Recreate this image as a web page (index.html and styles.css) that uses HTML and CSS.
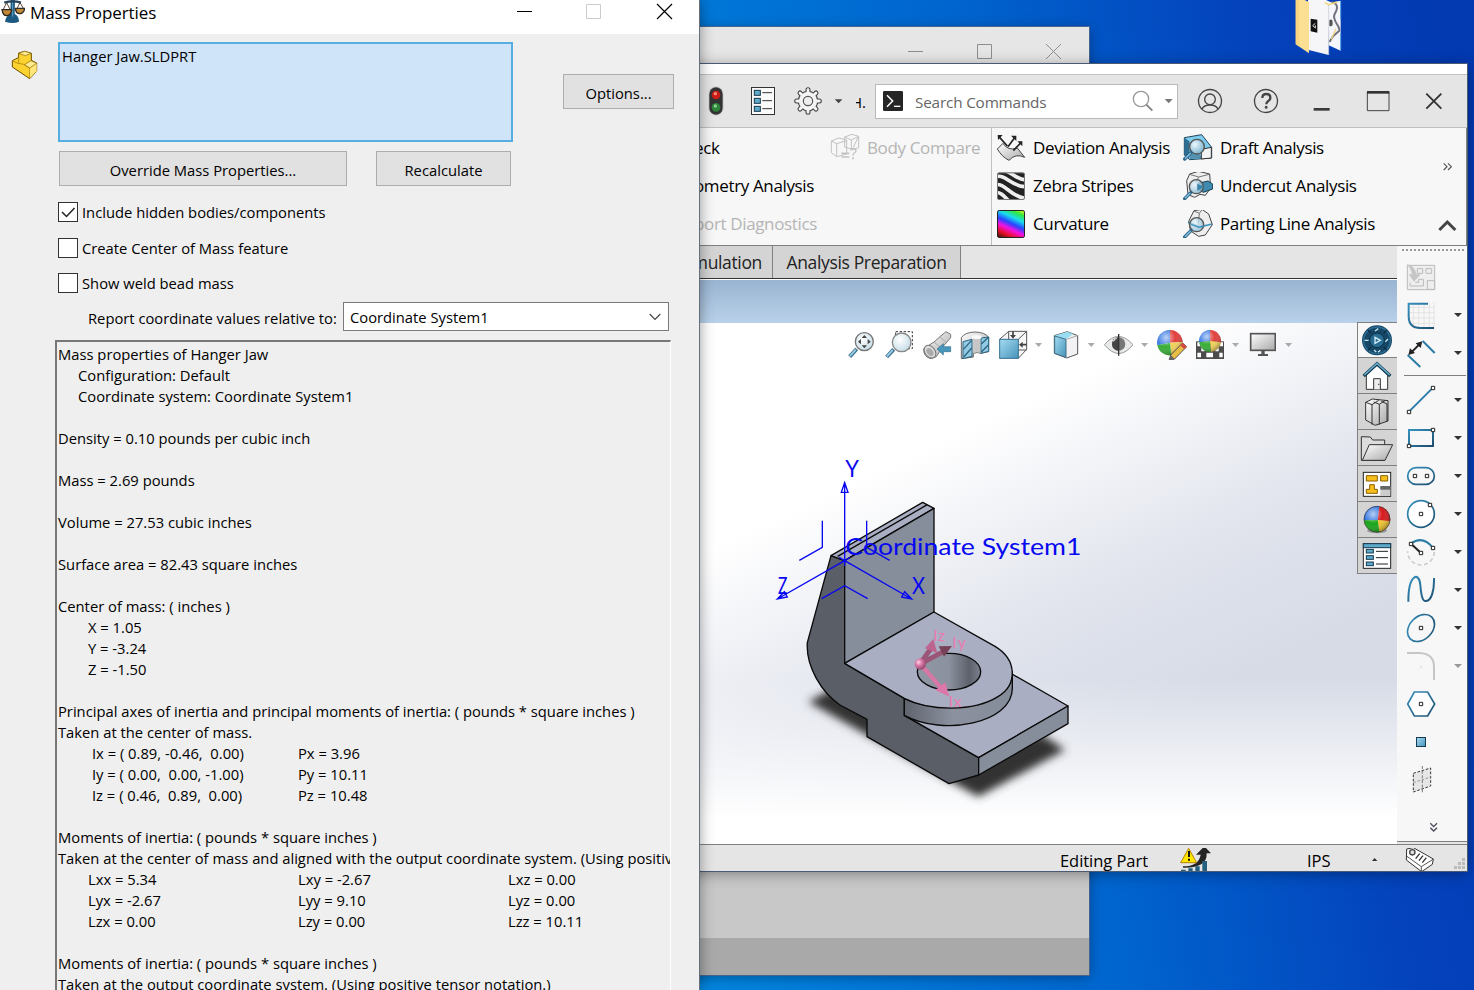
FILE: index.html
```html
<!DOCTYPE html>
<html lang="en">
<head>
<meta charset="utf-8">
<title>Mass Properties</title>
<link rel="stylesheet" href="styles.css">
</head>
<body>
<svg class="defs" width="0" height="0">
  <defs>
    <linearGradient id="ink" x1="0" y1="0" x2="1" y2="1"><stop offset="0" stop-color="#3590bd"/><stop offset="1" stop-color="#1d4f70"/></linearGradient>
    <linearGradient id="sky" x1="0" y1="0" x2="1" y2="1"><stop offset="0" stop-color="#a5dcf3"/><stop offset="1" stop-color="#4593b8"/></linearGradient>
    <linearGradient id="steel" x1="0" y1="0" x2="1" y2="1"><stop offset="0" stop-color="#fff"/><stop offset="1" stop-color="#a8a8a8"/></linearGradient>
    <radialGradient id="lens" cx=".4" cy=".35" r=".7"><stop offset="0" stop-color="#fff"/><stop offset="1" stop-color="#c3dbe6"/></radialGradient>
    <radialGradient id="lens2" cx=".35" cy=".35" r=".8"><stop offset="0" stop-color="#eaf8ff"/><stop offset="1" stop-color="#6ea9c6"/></radialGradient>
    <radialGradient id="gloss" cx=".35" cy=".3" r=".75"><stop offset="0" stop-color="#fff" stop-opacity=".65"/><stop offset=".5" stop-color="#fff" stop-opacity="0"/><stop offset="1" stop-color="#000" stop-opacity=".35"/></radialGradient>
    <linearGradient id="rainbow" gradientUnits="userSpaceOnUse" x1="984" y1="443" x2="940" y2="536"><stop offset="0" stop-color="#f5f51c"/><stop offset=".14" stop-color="#35e83b"/><stop offset=".32" stop-color="#19dcf0"/><stop offset=".5" stop-color="#2744ff"/><stop offset=".66" stop-color="#f312e2"/><stop offset=".84" stop-color="#e8102c"/><stop offset="1" stop-color="#5c1408"/></linearGradient>
    <linearGradient id="rim"><stop offset="0" stop-color="#5f646e"/><stop offset=".45" stop-color="#8b919e"/><stop offset="1" stop-color="#858c99"/></linearGradient>
    <linearGradient id="bore"><stop offset="0" stop-color="#8f96a4"/><stop offset=".5" stop-color="#8b919f"/><stop offset=".82" stop-color="#5d616b"/><stop offset="1" stop-color="#7c828f"/></linearGradient>
    <radialGradient id="pinkBall" cx=".35" cy=".35" r=".7"><stop offset="0" stop-color="#ffd3e6"/><stop offset=".4" stop-color="#dc7bab"/><stop offset="1" stop-color="#8d4468"/></radialGradient>
    <filter id="soft" x="-20%" y="-40%" width="140%" height="180%"><feGaussianBlur stdDeviation="13"/></filter>
    <clipPath id="zebraClip"><rect x="922" y="338" width="82" height="81" rx="5"/></clipPath>
  </defs>
</svg>

<main class="desktop">
  <svg class="folder" width="52" height="60" viewBox="60 0 156 180">
    <path d="M172 10L212 2V152L176 136Z" fill="#f4f6fb"/><path d="M186 6C205 12 204 25 194 42C184 62 212 78 208 92L190 108L178 126" fill="none" stroke="#71717f" stroke-width="6"/><path d="M212 4V58M212 100V150" stroke="#4d9de0" stroke-width="3"/><path d="M178 60q10-5 10 9t-10 8Z" fill="#555"/><path d="M198 86l-14 32" stroke="#f4d47c" stroke-width="4"/>
    <path d="M114 0H168L186 8L176 14V165L116 150Z" fill="#f6f6f8"/><path d="M164 8l12 6 26-8" fill="none" stroke="#f2d679" stroke-width="4"/><path d="M176 14V165" stroke="#c5c9d2" stroke-width="2"/><path d="M122 56L142 59V98L122 94Z" fill="#111"/><path d="M136 70L128 77L136 84V76" fill="none" stroke="#ddd" stroke-width="3"/>
    <path d="M77 0H104L117 6V160L77 133Z" fill="#fbdf92"/><path d="M77 0H88V140L77 133Z" fill="#f3cd74" opacity=".6"/>
  </svg>

  <section class="back-window">
    <header class="back-title">
      <svg width="155" height="20" viewBox="0 0 155 20" fill="none" stroke="#8e8e8e"><path d="M1 10.500H16M70.500 3.500h14v14h-14ZM139 3l15 15M154 3l-15 15"/></svg>
    </header>
    <footer class="back-footer"></footer>
  </section>

  <section class="cad">
    <div class="cad-edge"></div>
    <header class="cad-title">
      <svg class="light" width="16" height="34" viewBox="54 72 48 102"><rect x="55" y="79" width="46" height="88" rx="22" fill="#d0d0d0"/><rect x="58" y="82" width="40" height="82" rx="20" fill="#333"/><circle cx="78" cy="105" r="13" fill="#c91d17"/><circle cx="76" cy="101" r="5" fill="#ff8a7c"/><circle cx="78" cy="142" r="13" fill="#2d853b"/><circle cx="76" cy="138" r="5" fill="#8bd08f"/></svg>
      <svg class="props" width="26" height="34" viewBox="180 72 78 102"><rect x="184.500" y="82.500" width="69" height="81" fill="#fafafa" stroke="#333" stroke-width="3"/><g fill="#5fa9c9" stroke="#16394d" stroke-width="3"><rect x="193" y="91" width="18" height="15"/><rect x="193" y="115" width="18" height="15"/><rect x="193" y="139" width="18" height="15"/></g><path d="M217 98H246M217 122H246M217 146H246" stroke="#333" stroke-width="3"/></svg>
      <svg class="gear" width="30" height="34" viewBox="309 72 90 102"><g stroke-linecap="round"><g stroke="#444" stroke-width="15"><path d="M354 89v68M320 123h68M330 99l48 48M330 147l48-48"/></g><circle cx="354" cy="123" r="31" fill="#444"/><g stroke="#f4f4f4" stroke-width="8.500"><path d="M354 89v68M320 123h68M330 99l48 48M330 147l48-48"/></g></g><circle cx="354" cy="123" r="27.500" fill="#f4f4f4"/><circle cx="354" cy="123" r="14" fill="#eee" stroke="#555" stroke-width="3.500"/></svg>
      <svg class="gear-arrow" width="10" height="34" viewBox="432 72 30 102"><path d="M434 118h23l-11 12Z" fill="#444"/></svg>
      <span class="crumb"><span>H.</span></span>
      <div class="search">
        <svg width="20" height="20" viewBox="579 93 60 60"><rect x="579" y="93" width="60" height="60" rx="4" fill="#252525"/><path d="M591 106l17 17-17 17" fill="none" stroke="#fff" stroke-width="4.500"/><path d="M612 139h19" stroke="#fff" stroke-width="4"/></svg>
        <span class="search-text">Search Commands</span>
        <svg width="41" height="24" viewBox="154 90 123 72"><circle cx="181" cy="120" r="23" fill="none" stroke="#999" stroke-width="4"/><path d="M197 137l18 18" stroke="#888" stroke-width="6"/><path d="M252 120h24l-12 13Z" fill="#777"/></svg>
      </div>
      <svg class="user" width="26" height="34" viewBox="351 72 78 102" fill="none" stroke="#444" stroke-width="4"><circle cx="390" cy="123" r="34.500"/><circle cx="390" cy="118" r="16"/><path d="M366 148q4-13 24-13t24 13"/></svg>
      <svg class="help" width="26" height="34" viewBox="519 72 78 102" fill="none" stroke="#444" stroke-width="4"><circle cx="558" cy="123" r="34.500"/><path d="M547 114q0-12 12-12t12 11q0 6-6 10t-6 10" stroke-width="7"/><circle cx="558.500" cy="142" r="2" stroke-width="5"/></svg>
      <svg class="win-buttons" width="130" height="34" viewBox="700 72 390 102"><path d="M702 148h48" stroke="#3a3a3a" stroke-width="8"/><path d="M863 96h65v56h-65Z" fill="none" stroke="#444" stroke-width="3"/><path d="M862 97h67" stroke="#333" stroke-width="8"/><path d="M1040 101l45 45M1085 101l-45 45" stroke="#333" stroke-width="5.500"/></svg>
    </header>

    <div class="ribbon">
      <div class="group cut"><span class="cmd"><span>eck</span></span><span class="cmd geo"><span>ometry Analysis</span></span><span class="cmd off"><span>port Diagnostics</span></span></div>
      <div class="group compare">
        <span class="cmd off"><svg width="30" height="28" viewBox="420 222 90 84" fill="none" stroke="#c2c2c2" stroke-width="3"><path d="M424 243l22-9 24 6v42l-30 8-16-12ZM424 243l16 8 30-9M440 251v38M464 231l22-8 20 6v34l-16 6-26-8ZM464 231l20 9 22-11M484 240v28M490 262l14-30"/><path d="M454 280h24M454 291h24" stroke-width="5"/><path d="M482 272q1-7 8-7t8 7q0 4-5 7t-4 8" stroke-width="4"/><path d="M489 292v6" stroke-width="5"/></svg><span>Body Compare</span></span>
      </div>
      <div class="group analyze">
        <span class="cmd"><svg width="30" height="28" viewBox="918 222 90 84"><path d="M922 267l17-17q15 24 43 14l22 28q-27-13-47 9Q936 291 922 267Z" fill="url(#steel)" stroke="#444" stroke-width="3"/><g stroke="#222" stroke-width="5" fill="none"><path d="M952 258l-26-29M954 260l22-30M970 272l23-24"/></g><path d="M923 225h15l-14 15ZM963 227h16v16ZM982 244h15v15Z" fill="#222"/></svg><span>Deviation Analysis</span></span>
        <span class="cmd"><svg width="30" height="28" viewBox="918 336 90 84"><rect x="922" y="338" width="82" height="81" rx="5" fill="#222"/><g clip-path="url(#zebraClip)" fill="none" stroke="#eee" stroke-width="11"><path d="M918 350c30-8 40 26 86 30M940 332c25 2 35 26 68 28M914 374c34-6 44 36 96 42M914 398c20-4 30 14 44 26"/></g><rect x="922.500" y="338.500" width="81" height="80" rx="5" fill="none" stroke="#777" stroke-width="3"/></svg><span>Zebra Stripes</span></span>
        <span class="cmd"><svg width="30" height="28" viewBox="918 450 90 84"><rect x="922.500" y="451.500" width="81" height="81" rx="5" fill="url(#rainbow)" stroke="#222" stroke-width="3"/></svg><span>Curvature</span></span>
      </div>
      <div class="group draft">
        <span class="cmd"><svg width="31" height="28" viewBox="306 222 93 84"><path d="M313 233l52-9 30 38v32l-66 5-16-14Z" fill="#7fcdee" stroke="#1d4257" stroke-width="3"/><path d="M313 233l14 10v52l-14-9Z" fill="#2d6d90"/><path d="M327 243l40 50-38 5Z" fill="#5391b0"/><path d="M364 268l30-6v32l-30 3Z" fill="#f4f4f4" stroke="#333" stroke-width="3"/><circle cx="351" cy="260" r="22" fill="url(#lens2)" stroke="#555" stroke-width="4"/><path d="M333 278l-19 19" stroke="#2c6488" stroke-width="10" stroke-linecap="round"/><path d="M332 279l-17 17" stroke="#86c5e2" stroke-width="4"/></svg><span>Draft Analysis</span></span>
        <span class="cmd"><svg width="31" height="28" viewBox="306 336 93 84"><path d="M320 362l9-20 26-8 34 8 3 42-16 22-16-3-16 9-20-8Z" fill="#eee" stroke="#444" stroke-width="3"/><path d="M329 343l27 8 32-8M356 351l-8 16" fill="none" stroke="#777" stroke-width="3"/><path d="M354 370l30-7 14 9v15l-28 10-16-10Z" fill="#3f8bb0" stroke="#173d52" stroke-width="3"/><circle cx="349" cy="380" r="21" fill="url(#lens2)" fill-opacity=".8" stroke="#555" stroke-width="4"/><path d="M352 371v22l20-13Z" fill="#3984a9"/><path d="M332 398l-18 18" stroke="#2c6488" stroke-width="10" stroke-linecap="round"/><path d="M331 399l-16 16" stroke="#86c5e2" stroke-width="4"/></svg><span>Undercut Analysis</span></span>
        <span class="cmd"><svg width="31" height="28" viewBox="306 450 93 84"><path d="M326 484l16-32 24-4 20 14 11 32-21 31-20 4-24-16Z" fill="#eee" stroke="#444" stroke-width="3"/><path d="M342 453l16 7 8-11M358 460l-3 30" fill="none" stroke="#777" stroke-width="3"/><path d="M324 486l34 15 38-9" fill="none" stroke="#3d93bb" stroke-width="5"/><circle cx="350" cy="494" r="21" fill="url(#lens2)" fill-opacity=".7" stroke="#555" stroke-width="4"/><path d="M333 493l24 9 14-4" fill="none" stroke="#3d93bb" stroke-width="4"/><path d="M333 512l-19 19" stroke="#2c6488" stroke-width="10" stroke-linecap="round"/><path d="M332 513l-17 17" stroke="#86c5e2" stroke-width="4"/></svg><span>Parting Line Analysis</span></span>
      </div>
      <svg class="ribbon-end" width="22" height="78" viewBox="1067 300 66 234" fill="none"><path d="M1090 310l10 10-10 10M1103 310l10 10-10 10" stroke="#555" stroke-width="3.500"/><path d="M1077 510l24-24 24 24" stroke="#444" stroke-width="9"/></svg>
    </div>

    <div class="workspace">
      <div class="doc">
        <nav class="tabs"><span class="tab first">mulation</span><span class="tab">Analysis Preparation</span></nav>
        <div class="doc-bar"></div>
        <div class="view">
          <svg class="scene" width="340" height="380" viewBox="0 0 1020 1140">
            <path d="M145 785L220 745L700 900L850 885L915 930L655 1070L321 885Z" fill="#333" filter="url(#soft)"/>
            <g stroke="#0a0a0a" stroke-width="4" stroke-linejoin="round">
              <path d="M213 347L254 362V670L433 775V826L656 953V1005L567 1031L321 890V838L240 795C185 757 137 680 142 608Z" fill="#5a5e67"/>
              <path d="M213 347L488 187L522 205L254 362Z" fill="#a9aec2"/><path d="M233 349L502 194" fill="none"/>
              <path d="M254 362L522 205V516L254 670Z" fill="#868e9b"/>
              <path d="M700 670L924 798L656 953L433 826Z" fill="#a9aec2"/>
              <path d="M656 953L924 798V851L656 1005Z" fill="#868e9b"/>
              <path d="M433 775C530 825 757 810 757 695V745C757 850 550 890 433 826Z" fill="url(#rim)"/>
              <path d="M254 670L522 516L705 619C773 660 772 735 714 770C640 816 510 814 433 775Z" fill="#a9aec2"/>
              <ellipse cx="567" cy="695" rx="95" ry="55" fill="url(#bore)"/>
            </g>
            <g class="principal"><path d="M480 672L513 625" stroke="#9b5576" stroke-width="15"/><path d="M520 597L495 625L532 640Z" fill="#bd648f"/><path d="M485 670L555 632" stroke="#9b5576" stroke-width="14"/><path d="M576 618L536 619L552 650Z" fill="#784258"/><path d="M481 672L542 742" stroke="#d777a5" stroke-width="13"/><path d="M568 770L526 750L556 727Z" fill="#dc78a9"/><circle cx="481" cy="672" r="17" fill="url(#pinkBall)"/>
              <text x="520" y="602" textLength="34">Iz</text><text x="577" y="624" textLength="40">Iy</text><text x="566" y="802" textLength="38">Ix</text></g>
            <g fill="none" stroke="#0808f0" stroke-width="4"><path d="M254 362V128M244 157L254 128L264 157ZM254 362L455 477M425 471L455 477L434 455ZM254 362L52 477M73 455L52 477L82 471ZM238 352L270 372M270 352L238 372M254 350V378M187 242V322L118 361M320 242V322L389 361M185 476L254 437L323 476"/></g>
            <g class="axis-text"><text x="256" y="112" textLength="41" lengthAdjust="spacingAndGlyphs">Y</text><text x="456" y="461" textLength="39" lengthAdjust="spacingAndGlyphs">X</text><text x="54" y="461" textLength="28" lengthAdjust="spacingAndGlyphs">Z</text><text x="256" y="345" textLength="708" lengthAdjust="spacingAndGlyphs">Coordinate System1</text></g>
          </svg>
          <div class="view-tools">
            <svg width="29" height="30" viewBox="51 60 87 90"><circle cx="103" cy="95" r="27" fill="url(#lens)" stroke="#777" stroke-width="4"/><path d="M103 75l8 9h-16ZM103 115l8-9h-16ZM84 95l9-8v16ZM122 95l-9-8v16Z" fill="#444"/><path d="M80 117l-21 23" stroke="#457895" stroke-width="12"/><path d="M77 119l-17 19" stroke="#9dd3eb" stroke-width="5"/></svg>
            <svg width="30" height="30" viewBox="162 60 90 90"><path d="M197 65h50v51h-50Z" fill="none" stroke="#333" stroke-width="3" stroke-dasharray="7 5"/><circle cx="215" cy="97" r="28" fill="url(#lens)" stroke="#888" stroke-width="4"/><path d="M191 118l-21 23" stroke="#457895" stroke-width="12"/><path d="M188 120l-17 19" stroke="#9dd3eb" stroke-width="5"/></svg>
            <svg width="30" height="30" viewBox="276 60 90 90"><path d="M281 116l31-20 18-16 18-15 14 8v10l-24 28-19 29-16 6q-23-5-22-30Z" fill="url(#steel)" stroke="#777" stroke-width="3"/><path d="M312 96l26 22M330 81l19 17" stroke="#aaa" stroke-width="3"/><ellipse cx="300" cy="125" rx="15" ry="21" transform="rotate(-38 300 125)" fill="#ddd" stroke="#777" stroke-width="3"/><ellipse cx="300" cy="126" rx="9" ry="13" transform="rotate(-38 300 126)" fill="#aaa"/><path d="M321 117l19-16v9h22v15h-22v10Z" fill="#4a97bd" stroke="#376f90" stroke-width="2"/></svg>
            <svg width="30" height="30" viewBox="390 60 90 90"><path d="M394 83q10-16 41-17 31 1 41 16v43l-24 5q-10-5-22 0v11l-36 5Z" fill="url(#steel)" stroke="#666" stroke-width="3"/><path d="M399 95l27-7v51l-27 7ZM453 84l23-3v43l-23 6Z" fill="#91cbe3" stroke="#2d6482" stroke-width="3"/><path d="M400 118l25-27M401 141l24-27M454 102l21-20M454 126l21-21" stroke="#2d6482" stroke-width="4"/><path d="M429 84h22v45q-8-5-22 0Z" fill="#c7c7c7"/><ellipse cx="440" cy="81" rx="15" ry="6" fill="#fafafa"/></svg>
            <svg width="28" height="30" viewBox="504 60 84 90" overflow="visible"><path d="M509 88l27-24h54v54l-25 27M565 88l25-24M536 64v24M565 120h25" fill="#f7f7f7" stroke="#555" stroke-width="3"/><rect x="509" y="88" width="56" height="57" fill="url(#sky)" stroke="#366f90" stroke-width="3"/><path d="M549 64v12M590 104h-14" stroke="#444" stroke-width="5"/><path d="M540 75h18l-9 11ZM578 95v18l-11-9Z" fill="#444"/></svg>
            <svg width="10" height="30" viewBox="612 60 30 90"><path d="M615 99h21l-10 12Z" fill="#aaa"/></svg>
            <svg width="27" height="30" viewBox="666 60 81 90"><path d="M673 77l39-12 31 12v55l-33 12-37-14Z" fill="#f2f2f5" stroke="#555" stroke-width="3"/><path d="M673 77l39-12 18 7-23 16Z" fill="#99ddf3"/><path d="M674 78l34 10v54l-34-12Z" fill="url(#sky)" stroke="#416f88" stroke-width="3"/><path d="M709 88l34-11" stroke="#aaa" stroke-width="3"/></svg>
            <svg width="8" height="30" viewBox="771 60 24 90"><path d="M773 99h21l-10 12Z" fill="#aaa"/></svg>
            <svg width="30" height="30" viewBox="819 60 90 90"><path d="M823 104q42-49 86 0-42 53-86 0Z" fill="#e7e9ea" stroke="#999" stroke-width="3"/><circle cx="866" cy="102" r="20" fill="#777"/><path d="M866 82a20 20 0 0 0 0 40Z" fill="#444"/><path d="M866 72v65" stroke="#333" stroke-width="4"/><path d="M850 94q4-8 10-9" fill="none" stroke="#ddd" stroke-width="4"/></svg>
            <svg width="7" height="30" viewBox="933 60 21 90"><path d="M933 99h21l-10 12Z" fill="#aaa"/></svg>
            <svg width="31" height="30" viewBox="978 60 93 90"><g><path d="M1020 98V60a38 38 0 0 0-38 46Z" fill="#3d7ce3"/><path d="M1020 98V60a38 38 0 0 1 38 36Z" fill="#df3f3c"/><path d="M1020 98l38-2a38 38 0 0 1-34 40Z" fill="#f2d15a"/><path d="M1020 98l-38 8a38 38 0 0 0 42 30Z" fill="#37ad36"/><circle cx="1020" cy="98" r="38" fill="url(#gloss)"/></g><path d="M1058 99l12 11-36 37-17 5 5-17Z" fill="#e9bd43" stroke="#555" stroke-width="3"/><path d="M1058 99l12 11-7 8-13-12Z" fill="#d44a41"/><path d="M1017 152l5-17 12 12Z" fill="#666"/></svg>
            <svg width="29" height="30" viewBox="1095 60 87 90"><rect x="1098" y="94" width="84" height="53" fill="#4c4c4c"/><path d="M1102 97h10v12h-10ZM1170 97h9v12h-9ZM1114 112h10v12h-10ZM1156 112h10v12h-10ZM1102 128h11v14h-11ZM1129 128h20v14h-20ZM1168 128h10v14h-10Z" fill="#fff"/><path d="M1140 93V60a33 33 0 0 0-33 37Z" fill="#3d7ce3"/><path d="M1140 93V60a33 33 0 0 1 33 37Z" fill="#df3f3c"/><path d="M1140 93l33 4a33 33 0 0 1-31 29Z" fill="#f2d15a"/><path d="M1140 93l-33 4a33 33 0 0 0 35 29Z" fill="#37ad36"/><circle cx="1140" cy="93" r="33" fill="url(#gloss)"/></svg>
            <svg width="9" height="30" viewBox="1206 60 27 90"><path d="M1206 99h21l-10 12Z" fill="#aaa"/></svg>
            <svg width="27" height="30" viewBox="1257 60 81 90"><rect x="1262" y="71" width="74" height="50" fill="url(#steel)" stroke="#555" stroke-width="5"/><path d="M1294 122h10v10h10v6h-30v-6h10Z" fill="#555"/></svg>
            <svg width="9" height="30" viewBox="1362 60 27 90"><path d="M1365 99h21l-10 12Z" fill="#aaa"/></svg>
          </div>
          <aside class="pane-tabs">
            <span class="pane on"><svg width="39" height="34" viewBox="54 249 117 102"><circle cx="111" cy="301" r="45" fill="#164766"/><circle cx="111" cy="301" r="40" fill="none" stroke="#2c6e93" stroke-width="4"/><circle cx="111" cy="301" r="22" fill="#286c91" stroke="#0b2e45" stroke-width="3"/><path d="M105 292l16 9-16 9Z" fill="none" stroke="#d6eefa" stroke-width="4"/><path d="M74 301h12M136 305l8-8M105 273l10-7M102 330l7 6M114 336q6-2 6-6" fill="none" stroke="#c6e6f4" stroke-width="4"/><path d="M84 270l9 9M131 321l9 9M131 280l9-9M84 331l9-9" stroke="#0b2e45" stroke-width="4"/></svg></span>
            <span class="pane"><svg width="39" height="35" viewBox="54 354 117 105"><path d="M79 405v43h64v-43l-32-29Z" fill="#fff" stroke="#333" stroke-width="3"/><path d="M101 448v-32h20v32" fill="#eee" stroke="#333" stroke-width="3"/><path d="M71 408l40-37 40 37" fill="none" stroke="#163d54" stroke-width="10"/><path d="M73 405l38-35 38 35" fill="none" stroke="#65a9c8" stroke-width="5"/><path d="M114 433h4" stroke="#333" stroke-width="3"/></svg></span>
            <span class="pane"><svg width="39" height="35" viewBox="54 462 117 105" fill="url(#steel)" stroke="#333" stroke-width="3"><path d="M77 487l20-10 47 5v61l-38 13-29-16Z"/><path d="M77 487l19 7v60M96 494l20-13M101 486l17 7v61M118 493l18-12M124 484l17 8v52" fill="none"/></svg></span>
            <span class="pane"><svg width="39" height="35" viewBox="54 570 117 105" stroke="#333" stroke-width="3"><path d="M64 590l27 1 7 9h36v61H64Z" fill="#ddd"/><path d="M88 614h70l-23 47H67Z" fill="url(#steel)"/></svg></span>
            <span class="pane"><svg width="39" height="35" viewBox="54 678 117 105"><rect x="70" y="697" width="82" height="72" fill="#fff" stroke="#222" stroke-width="3"/><path d="M79 707h33v16H79ZM122 707h21v16h-21ZM89 734h14v14h9v12H79v-12h10Z" fill="#f7bf1b" stroke="#8a5e00" stroke-width="3"/><path d="M121 740h30v28h-30Z" fill="#ccc"/><path d="M121 738h31v11h-31Z" fill="#666"/></svg></span>
            <span class="pane"><svg width="39" height="35" viewBox="54 786 117 105"><ellipse cx="111" cy="872" rx="30" ry="8" fill="#999"/><path d="M113 840l5-41a39 39 0 0 0-46 42Z" fill="#2e72df"/><path d="M113 840l5-41a39 39 0 0 1 32 46Z" fill="#d7191d"/><path d="M113 840l37 3a39 39 0 0 1-32 33Z" fill="#f0c330"/><path d="M113 840l-41 1a39 39 0 0 0 46 35Z" fill="#19a419"/><circle cx="111" cy="838" r="39" fill="url(#gloss)" stroke="#333" stroke-width="2"/></svg></span>
            <span class="pane"><svg width="39" height="35" viewBox="54 894 117 105"><rect x="70" y="911" width="82" height="74" fill="#fff" stroke="#222" stroke-width="3"/><rect x="70" y="911" width="82" height="12" fill="#5ea8ca" stroke="#173b50" stroke-width="3"/><g fill="#5ea8ca" stroke="#173b50" stroke-width="3"><rect x="79" y="928" width="21" height="11"/><rect x="79" y="947" width="21" height="11"/><rect x="79" y="966" width="21" height="11"/></g><path d="M108 934h36M108 953h36M108 972h36" stroke="#222" stroke-width="3"/></svg></span>
          </aside>
        </div>
      </div>

      <aside class="sketch-bar">
        <span class="grip"></span>
        <span class="tool"><svg width="30" height="30" viewBox="198 66 90 90"><path d="M202 76h82v73h-82Z" fill="#eee" stroke="#bbb" stroke-width="3"/><path d="M232 86h16v14h-16ZM258 86h17v14h-17ZM226 127h10v-9h14v20h-40v-10M262 122h22v26h-22Z" fill="none" stroke="#bbb" stroke-width="3"/><path d="M199 73q24 1 31 30h12l-20 22-16-22h9q0-16-16-30Z" fill="#c6c6c6"/></svg></span>
        <span class="tool"><svg width="30" height="30" viewBox="198 180 90 90"><path d="M206 202h79M206 218h79M206 234h79M206 250h79M220 187v82M236 187v82M252 187v82M268 187v82M282 187v82" stroke="#ddd" stroke-width="2"/><path d="M264 191h-58v38q0 35 35 35h41" fill="none" stroke="url(#ink)" stroke-width="6"/></svg><i class="arrow"></i></span>
        <span class="tool"><svg width="30" height="30" viewBox="198 294 90 90" fill="none"><path d="M203 345l38 36M248 303l36 36" stroke="#2b7da6" stroke-width="6"/><path d="M211 340l30-30" stroke="#222" stroke-width="6"/><path d="M205 345l5-20 15 14ZM247 304l-5 20-15-14Z" fill="#222"/></svg><i class="arrow"></i></span>
        <span class="rule"></span>
        <span class="tool"><svg width="30" height="30" viewBox="198 435 90 90"><path d="M207 515l72-72" stroke="#2b7da6" stroke-width="6"/><path d="M202 511h10v10h-10ZM274 439h10v10h-10Z" fill="#fff" stroke="#222" stroke-width="3"/></svg><i class="arrow"></i></span>
        <span class="tool"><svg width="30" height="30" viewBox="198 549 90 90"><rect x="207" y="570" width="72" height="48" fill="none" stroke="url(#ink)" stroke-width="6"/><path d="M202 613h10v10h-10ZM274 565h10v10h-10Z" fill="#fff" stroke="#222" stroke-width="3"/></svg><i class="arrow"></i></span>
        <span class="tool"><svg width="30" height="30" viewBox="198 663 90 90" fill="none"><rect x="203" y="683" width="80" height="50" rx="25" stroke="url(#ink)" stroke-width="5"/><path d="M220 703h10v10h-10ZM256 703h10v10h-10Z" stroke="#222" stroke-width="3"/></svg><i class="arrow"></i></span>
        <span class="tool"><svg width="30" height="30" viewBox="198 777 90 90" fill="#fff"><circle cx="243" cy="822" r="40" stroke="url(#ink)" stroke-width="5"/><path d="M238 817h10v10h-10ZM265 790h10v10h-10Z" stroke="#222" stroke-width="3"/></svg><i class="arrow"></i></span>
        <span class="tool"><svg width="30" height="30" viewBox="198 891 90 90" fill="none"><path d="M283 936a40 40 0 0 1-80-2" stroke="#ccc" stroke-width="5" stroke-dasharray="12 8"/><path d="M213 911q34-26 66 12" stroke="#2b7da6" stroke-width="6"/><path d="M213 911l30 28" stroke="#222" stroke-width="6"/><path d="M208 907h10v10h-10ZM238 934h10v10h-10ZM274 919h10v10h-10Z" fill="#fff" stroke="#222" stroke-width="3"/></svg><i class="arrow"></i></span>
        <span class="tool"><svg width="30" height="30" viewBox="198 15 90 90"><path d="M205 95C205 10 238 5 241 45S250 95 258 93C275 92 283 60 282 24" fill="none" stroke="url(#ink)" stroke-width="6"/></svg><i class="arrow"></i></span>
        <span class="tool"><svg width="30" height="30" viewBox="198 129 90 90" fill="none"><ellipse cx="243" cy="174" rx="46" ry="34" transform="rotate(-45 243 174)" stroke="url(#ink)" stroke-width="5"/><path d="M238 169h10v10h-10Z" stroke="#222" stroke-width="3"/></svg><i class="arrow"></i></span>
        <span class="tool"><svg width="30" height="30" viewBox="198 243 90 90" fill="none"><path d="M201 249h38q43 2 43 42v39" stroke="#c6c6c6" stroke-width="6"/><path d="M238 286l10 10M248 286l-10 10" stroke="#ddd" stroke-width="2"/></svg><i class="arrow pale"></i></span>
        <span class="tool"><svg width="30" height="30" viewBox="198 357 90 90" fill="#fff"><path d="M223 366h40l21 36-21 36h-40l-20-36Z" stroke="url(#ink)" stroke-width="5"/><path d="M238 397h10v10h-10Z" stroke="#222" stroke-width="3"/></svg></span>
        <span class="tool"><svg width="30" height="30" viewBox="198 471 90 90"><rect x="229.500" y="502.500" width="27" height="27" fill="url(#sky)" stroke="#153c52" stroke-width="3"/></svg></span>
        <span class="tool"><svg width="30" height="30" viewBox="198 585 90 90" fill="none"><path d="M220 610l52-16v54l-52 18Z" fill="#e6e6e6" stroke="#333" stroke-width="3" stroke-dasharray="8 5"/><path d="M220 638l52-17" stroke="#999" stroke-width="3" stroke-dasharray="8 5"/><path d="M247 588v84" stroke="#777" stroke-width="3" stroke-dasharray="9 5"/></svg></span>
        <svg class="more" width="24" height="12" viewBox="266 756 72 36" fill="none" stroke="#4a4a5a" stroke-width="4"><path d="M270 763l10 10 10-10M270 776l10 10 10-10"/></svg>
      </aside>
    </div>

    <footer class="status">
      <span class="editing">Editing Part</span>
      <svg width="32" height="24" viewBox="450 51 96 72"><path d="M459 106Q506 106 512 71H498L518 51H528L543 67H530Q532 112 459 110Z" fill="#252525"/><path d="M453 116h14v4h-14ZM475 112h13v8h-13ZM496 106h13v14h-13ZM517 90h14v30h-14Z" fill="#23607e"/><path d="M476 52l24 43h-48Z" fill="#ffe500" stroke="#b88300" stroke-width="3" stroke-linejoin="round"/><path d="M477 60v18M477 83v6" stroke="#111" stroke-width="6"/></svg>
      <span class="ips">IPS</span>
      <svg class="up" width="6" height="24" viewBox="1026 51 18 72"><path d="M1026 90h16l-8-9Z" fill="#333"/></svg>
      <svg class="tag" width="30" height="24" viewBox="1126 51 90 72"><path d="M1131 54l20-4 60 34-3 16-32 22-46-35Z" fill="#fff" stroke="#333" stroke-width="3"/><path d="M1132 76l43 31 35-22M1175 107v13" fill="none" stroke="#555" stroke-width="3"/><circle cx="1148" cy="64" r="8" fill="#ddd" stroke="#444" stroke-width="4"/><path d="M1170 68l-12 15M1180 74l-12 15M1190 80l-12 15" stroke="#333" stroke-width="4"/></svg>
      <svg class="resize" width="12" height="24" viewBox="1272 54 36 72"><path d="M1296 84h9v9h-9ZM1284 96h9v9h-9ZM1296 96h9v9h-9ZM1272 108h9v9h-9ZM1284 108h9v9h-9ZM1296 108h9v9h-9Z" fill="#bbb"/></svg>
    </footer>
  </section>

  <section class="dialog">
    <header class="dialog-title">
      <svg width="25" height="24" viewBox="0 0 75 72"><path d="M32 0h13l-1 42q13 7 13 23-18 8-42 0 2-16 16-23Z" fill="#1d5a82"/><path d="M38 0v50" stroke="#5fa3c8" stroke-width="3"/><path d="M13 8q25-8 50 0" fill="none" stroke="#22405a" stroke-width="7"/><path d="M20 8L9 30M20 8l11 22M60 8L50 28M60 8l12 20" stroke="#5a4632" stroke-width="3"/><path d="M6 29h29q-2 17-14 18T6 29ZM46 25h28q-2 15-14 16T46 25Z" fill="#c28a35" stroke="#302b25" stroke-width="4"/></svg>
      <h1>Mass Properties</h1>
      <svg class="dialog-buttons" width="160" height="20" viewBox="0 0 160 20" fill="none"><path d="M1 9.500h15" stroke="#000"/><path d="M70.500 2.500h14v14h-14Z" stroke="#ccc"/><path d="M141 2l15 15M156 2l-15 15" stroke="#000" stroke-width="1.200"/></svg>
    </header>
    <div class="selection">
      <svg width="28" height="30" viewBox="33 150 84 90"><path d="M37 182l18-9 1-14 18-5 20 6v21l16 8v25l-21 22-52-35Z" fill="#fbd230" stroke="#6d5000" stroke-width="3" stroke-linejoin="round"/><path d="M56 160l18-6 20 6-18 7ZM73 194l20-12 17 8-21 14Z" fill="#ffeb94" stroke="#8a6600" stroke-width="2"/><path d="M37 183l17 7 18 3 17 12v30M56 160v29" fill="none" stroke="#a07500" stroke-width="2"/><path d="M90 206l20-15v23l-20 20Z" fill="#ffe77d"/></svg>
      <div class="part-list">Hanger Jaw.SLDPRT</div>
      <button class="btn options">Options...</button>
    </div>
    <div class="actions"><button class="btn override">Override Mass Properties...</button><button class="btn recalc">Recalculate</button></div>
    <div class="checks">
      <label><i class="box"><svg width="18" height="18" viewBox="0 0 18 18"><path d="M3 9l4.500 4.500L15.500 5" fill="none" stroke="#222" stroke-width="1.500"/></svg></i><span>Include hidden bodies/components</span></label>
      <label><i class="box"></i><span>Create Center of Mass feature</span></label>
      <label><i class="box"></i><span>Show weld bead mass</span></label>
    </div>
    <div class="coords"><span class="coords-label">Report coordinate values relative to:</span><div class="combo"><span>Coordinate System1</span><svg width="12" height="8" viewBox="0 0 12 8"><path d="M.7 1L6 6.300 11.300 1" fill="none" stroke="#444" stroke-width="1.200"/></svg></div></div>
    <div class="report">
      <p>Mass properties of Hanger Jaw</p>
      <p class="in20">Configuration: Default</p>
      <p class="in20">Coordinate system: Coordinate System1</p>
      <p class="gap">Density = 0.10 pounds per cubic inch</p>
      <p class="gap">Mass = 2.69 pounds</p>
      <p class="gap">Volume = 27.53 cubic inches</p>
      <p class="gap">Surface area = 82.43 square inches</p>
      <p class="gap">Center of mass: ( inches )</p>
      <p class="in30">X = 1.05</p>
      <p class="in30">Y = -3.24</p>
      <p class="in30">Z = -1.50</p>
      <p class="gap">Principal axes of inertia and principal moments of inertia: ( pounds * square inches )</p>
      <p>Taken at the center of mass.</p>
      <div class="table axes"><span>Ix = ( 0.89, -0.46,&nbsp; 0.00)</span><span>Px = 3.96</span><span>Iy = ( 0.00,&nbsp; 0.00, -1.00)</span><span>Py = 10.11</span><span>Iz = ( 0.46,&nbsp; 0.89,&nbsp; 0.00)</span><span>Pz = 10.48</span></div>
      <p class="gap">Moments of inertia: ( pounds * square inches )</p>
      <p>Taken at the center of mass and aligned with the output coordinate system. (Using positive</p>
      <div class="table tensor"><span>Lxx = 5.34</span><span>Lxy = -2.67</span><span>Lxz = 0.00</span><span>Lyx = -2.67</span><span>Lyy = 9.10</span><span>Lyz = 0.00</span><span>Lzx = 0.00</span><span>Lzy = 0.00</span><span>Lzz = 10.11</span></div>
      <p class="gap">Moments of inertia: ( pounds * square inches )</p>
      <p>Taken at the output coordinate system. (Using positive tensor notation.)</p>
    </div>
  </section>
</main>
</body>
</html>
```
FILE: styles.css
```css
* { box-sizing: border-box; }
body { margin: 0; font-family: "Open Sans", "Noto Sans", sans-serif; font-size: 14.75px; color: #000; }
svg { display: block; flex: none; }
p, h1 { margin: 0; font-weight: 400; }
.defs { position: absolute; }
.desktop { position: relative; width: 1474px; height: 990px; overflow: hidden; background: linear-gradient(80deg, #0088e0 40%, #0065cf 68%, #0442bb 86%, #0238b0 100%); }
.folder { position: absolute; left: 1290px; top: 0; }

/* Inactive window behind the CAD application */
.back-window { position: absolute; left: 680px; top: 27px; width: 409px; height: 948px; display: flex; flex-direction: column; justify-content: space-between; background: #c8c8c8; box-shadow: 0 0 0 1px #47658d, 0 2px 12px rgba(0,0,0,.35); }
.back-title { height: 40px; padding: 14px 0 0 227px; background: #e6e6e6; }
.back-footer { height: 37px; background: #a9a9a9; }

.cad { position: absolute; left: 680px; top: 64px; width: 787px; height: 807px; display: flex; flex-direction: column; background: #e5e5e5; box-shadow: 0 0 0 1px #4b5b74, 0 2px 14px rgba(0,0,0,.4); }
.cad-edge { height: 11px; background: #fff; border-bottom: 1px solid #c2c2c2; }
.cad-title { display: flex; align-items: center; height: 53px; border-bottom: 1px solid #c0c0c0; padding-left: 28px; }
.props { margin-left: 26px; }
.gear { margin-left: 17px; }
.gear-arrow { margin-left: 11px; }
.crumb { display: flex; justify-content: flex-end; width: 10px; margin-left: 12px; padding-top: 2px; overflow: hidden; font-size: 15px; }
.search { display: flex; align-items: center; width: 303px; height: 35px; margin-left: 9px; padding: 0 4px 0 7px; background: #fff; border: 1px solid #b9b9b9; }
.search-text { flex: 1; margin: 2px 0 0 12px; font-size: 15.300px; color: #666; letter-spacing: -.18px; }
.user { margin-left: 19px; }
.help { margin-left: 30px; }
.win-buttons { margin-left: 34px; }

.ribbon { display: flex; height: 118px; background: #f7f7f7; border-bottom: 1px solid #808080; border-right: 1px solid #808080; font-size: 17px; }
.group { display: flex; flex-direction: column; padding-top: 1px; }
.cmd { display: flex; align-items: center; height: 38px; white-space: nowrap; letter-spacing: -.36px; }
.cmd span { padding-bottom: 2px; }
.off { color: #b5b5b5; }
.cut { width: 150px; padding-left: 14px; }
.compare { width: 162px; border-right: 1px solid #c0c0c0; }
.compare .cmd { gap: 7px; }
.analyze { width: 186px; padding-left: 4px; }
.analyze .cmd { gap: 7px; }
.draft { width: 258px; padding-left: 4px; }
.draft .cmd { gap: 7px; }
.ribbon-end { margin-top: 32px; }

.workspace { display: flex; height: 598px; }
.doc { width: 717px; display: flex; flex-direction: column; }
.tabs { display: flex; height: 33px; border-bottom: 1px solid #333; font-size: 17.500px; color: #222; }
.tab { display: flex; align-items: center; justify-content: center; width: 188px; background: #d4d4d4; border-right: 1px solid #808080; white-space: nowrap; letter-spacing: -.35px; }
.first { width: 93px; justify-content: flex-end; padding-right: 10px; }
.doc-bar { height: 44px; border-top: 1px solid #fff; background: linear-gradient(#99b4d1, #b9d1ea); }
.view { position: relative; flex: 1; background: linear-gradient(to bottom, rgba(255,255,255,0) 68%, #fff 95%), linear-gradient(155deg, #fff 28%, #e1e4ed 54%, #d6dbe6 72%); }
.scene { position: absolute; left: 80px; top: 117px; overflow: visible; }
.axis-text { font: 72px "Lato", sans-serif; fill: #0808f0; }
.principal text { font: 44px "Lato", sans-serif; fill: #ee79af; }
.view-tools { display: flex; gap: 8px; padding: 7px 0 0 167px; }
.pane-tabs { position: absolute; right: 0; top: -1px; width: 40px; height: 252px; border: 1px solid #808080; border-right: 0; background: #808080; display: flex; flex-direction: column; gap: 1px; }
.pane { height: 35px; background: #d4d4d4; }
.on { height: 34px; background: #f7f7f7; }

.sketch-bar { width: 70px; height: 596px; background: #f7f7f7; border-bottom: 1px solid #808080; display: flex; flex-direction: column; align-items: stretch; padding-top: 3px; }
.grip { height: 2px; margin: 0 2px 7px 5px; background: repeating-linear-gradient(90deg, #999 0 2px, transparent 2px 4px); }
.tool { display: flex; align-items: center; height: 38px; padding: 0 5px 0 9px; justify-content: space-between; }
.arrow { width: 0; height: 0; border: 4px solid transparent; border-top-color: #333; border-bottom: 0; margin-top: -1px; }
.pale { border-top-color: #999; }
.rule { height: 1px; margin: 3px 1px 5px 7px; background: #808080; flex: none; }
.more { margin: 22px 0 0 32px; }
.status { height: 27px; display: flex; align-items: flex-start; padding: 3px 0 0 380px; border-top: 1px solid #808080; font-size: 16.500px; background: #e5e5e5; }
.editing { width: 120px; line-height: 27px; letter-spacing: -.05px; margin-top: -1px; }
.ips { width: 65px; margin: -1px 0 0 95px; line-height: 27px; }
.tag { margin-left: 27px; }
.resize { margin-left: 19px; }

.dialog { position: absolute; left: 0; top: 0; width: 699px; height: 990px; background: #efefef; box-shadow: 0 0 0 1px #66707c, 0 0 14px rgba(0,0,0,.45); display: flex; flex-direction: column; }
.dialog > * { flex: none; }
.dialog-title { display: flex; height: 34px; background: #fff; }
.dialog-title h1 { width: 486px; margin-left: 5px; font-size: 17px; line-height: 26px; letter-spacing: -.1px; }
.dialog-buttons { margin-top: 2px; }
.selection { display: flex; height: 109px; padding: 8px 0 0 11px; align-items: flex-start; }
.selection > svg { margin-top: 8px; }
.part-list { width: 455px; height: 100px; margin-left: 19px; border: 2px solid #55ade0; background: #cfe4f8; padding: 1px 2px; line-height: 22px; }
.btn { height: 35px; padding: 2px 0 0; border: 1px solid #adadad; background: #e1e1e1; font: inherit; color: #000; }
.options { width: 111px; margin: 32px 0 0 50px; }
.actions { display: flex; gap: 29px; padding: 8px 0 0 59px; }
.override { width: 288px; }
.recalc { width: 135px; }
.checks { display: flex; flex-direction: column; gap: 15.500px; padding: 16px 0 0 58px; }
.checks label { display: flex; align-items: center; gap: 4px; height: 20px; }
.box { width: 20px; height: 20px; background: #fff; border: 1px solid #333; }
.coords { display: flex; padding: 9px 0 0 88px; }
.coords-label { width: 255px; line-height: 33px; white-space: nowrap; }
.combo { display: flex; align-items: center; justify-content: space-between; width: 326px; height: 29px; padding: 0 7px 0 6px; border: 1px solid #7a7a7a; background: #fff; }
.report { width: 616px; height: 650px; margin: 5px 0 0 55px; border-top: 2px solid #777; border-left: 2px solid #777; border-right: 1px solid #fff; padding: 2px 0 0 1px; line-height: 21px; white-space: nowrap; overflow: hidden; }
.gap { margin-top: 21px; }
.in20 { padding-left: 20px; }
.in30 { padding-left: 30px; }
.table { display: grid; }
.axes { grid-template-columns: 206px 200px; padding-left: 34px; }
.tensor { grid-template-columns: 210px 210px 150px; padding-left: 30px; }
```
